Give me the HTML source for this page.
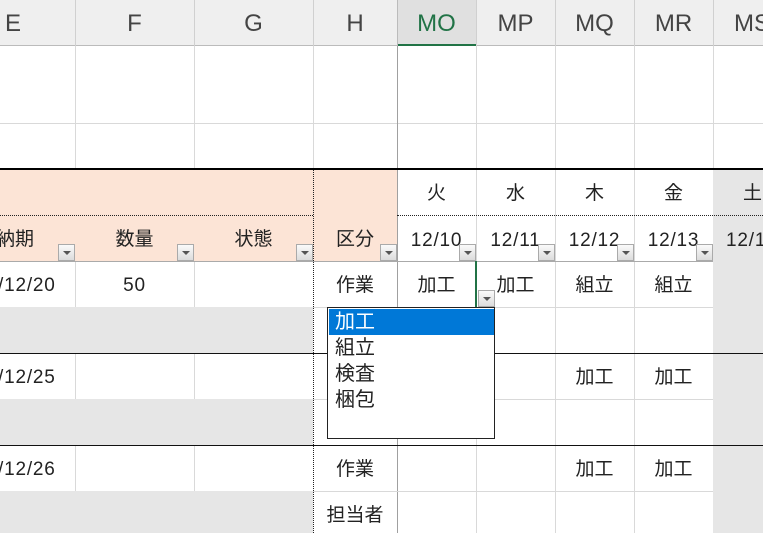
<!DOCTYPE html>
<html><head><meta charset="utf-8"><style>
body{margin:0;width:763px;height:533px;overflow:hidden;background:#fff;position:relative;font-family:"Liberation Sans","Noto Sans CJK JP",sans-serif;color:#222}
div{position:absolute;box-sizing:border-box}
.t{font-size:19px;text-align:center;line-height:20px}
.n{font-size:19px;letter-spacing:0.8px}
.h{font-size:24px;color:#444;text-align:center;top:11px;line-height:26px}
.vl{width:1px;background:#d9d9d9}
.hl{height:1px;background:#d9d9d9}
.btn{width:17px;height:17px;border:1px solid #aaa;background:linear-gradient(#fafafa,#dcdcdc)}
.btn:after{content:"";position:absolute;left:4px;top:6px;border-left:4px solid transparent;border-right:4px solid transparent;border-top:4px solid #555}
</style></head><body>
<div style="left:0;top:0;width:763px;height:46px;background:#efefef;border-bottom:1px solid #bbb"></div>
<div style="left:397px;top:0;width:79px;height:46px;background:#e0e0e0;border-bottom:2px solid #217346"></div>
<div class="vl" style="left:75px;top:0;height:46px;background:#d0d0d0"></div>
<div class="vl" style="left:194px;top:0;height:46px;background:#d0d0d0"></div>
<div class="vl" style="left:313px;top:0;height:46px;background:#d0d0d0"></div>
<div class="vl" style="left:397px;top:0;height:46px;background:#bbb"></div>
<div class="vl" style="left:476px;top:0;height:46px;background:#d0d0d0"></div>
<div class="vl" style="left:555px;top:0;height:46px;background:#d0d0d0"></div>
<div class="vl" style="left:634px;top:0;height:46px;background:#d0d0d0"></div>
<div class="vl" style="left:713px;top:0;height:46px;background:#d0d0d0"></div>
<div class="h" style="left:0;width:26px">E</div>
<div class="h" style="left:75px;width:119px">F</div>
<div class="h" style="left:194px;width:119px">G</div>
<div class="h" style="left:313px;width:84px">H</div>
<div class="h" style="left:397px;width:79px;color:#217346">MO</div>
<div class="h" style="left:476px;width:79px">MP</div>
<div class="h" style="left:555px;width:79px">MQ</div>
<div class="h" style="left:634px;width:79px">MR</div>
<div class="h" style="left:713px;width:70px;text-align:left;padding-left:21px">MS</div>
<div style="left:0;top:169px;width:397px;height:92px;background:#fce4d6"></div>
<div style="left:713px;top:169px;width:50px;height:364px;background:#e6e6e6"></div>
<div style="left:0;top:307px;width:313px;height:46px;background:#e6e6e6"></div>
<div style="left:0;top:399px;width:313px;height:46px;background:#e6e6e6"></div>
<div style="left:0;top:491px;width:313px;height:42px;background:#e6e6e6"></div>
<div class="hl" style="left:0;top:123px;width:763px"></div>
<div class="vl" style="left:75px;top:46px;height:123px"></div>
<div class="vl" style="left:194px;top:46px;height:123px"></div>
<div class="vl" style="left:313px;top:46px;height:123px"></div>
<div class="vl" style="left:397px;top:46px;height:487px;background:#a0a0a0"></div>
<div class="vl" style="left:476px;top:46px;height:487px"></div>
<div class="vl" style="left:555px;top:46px;height:487px"></div>
<div class="vl" style="left:634px;top:46px;height:487px"></div>
<div class="vl" style="left:713px;top:46px;height:123px"></div>
<div class="vl" style="left:75px;top:261px;height:46px"></div>
<div class="vl" style="left:194px;top:261px;height:46px"></div>
<div class="vl" style="left:75px;top:353px;height:46px"></div>
<div class="vl" style="left:194px;top:353px;height:46px"></div>
<div class="vl" style="left:75px;top:445px;height:46px"></div>
<div class="vl" style="left:194px;top:445px;height:46px"></div>
<div class="hl" style="left:397px;top:307px;width:316px"></div>
<div class="hl" style="left:313px;top:399px;width:400px"></div>
<div class="hl" style="left:313px;top:307px;width:84px"></div>
<div class="hl" style="left:313px;top:491px;width:400px"></div>
<div class="hl" style="left:0;top:261px;width:713px;background:#aaa"></div>
<div style="left:313px;top:169px;width:0;height:364px;border-left:1px dotted #222"></div>
<div style="left:0;top:215px;width:313px;height:0;border-top:1px dotted #222"></div>
<div style="left:397px;top:215px;width:366px;height:0;border-top:1px dotted #222"></div>
<div style="left:0;top:168px;width:763px;height:2px;background:#000"></div>
<div class="hl" style="left:0;top:353px;width:763px;background:#111"></div>
<div class="hl" style="left:0;top:445px;width:763px;background:#111"></div>
<div class="t" style="left:-4px;top:230px;width:44px;text-align:left">納期</div>
<div class="t" style="left:75px;top:230px;width:119px">数量</div>
<div class="t" style="left:194px;top:230px;width:119px">状態</div>
<div class="t" style="left:313px;top:230px;width:84px">区分</div>
<div class="btn" style="left:58px;top:244px"></div>
<div class="btn" style="left:177px;top:244px"></div>
<div class="btn" style="left:296px;top:244px"></div>
<div class="btn" style="left:380px;top:244px"></div>
<div class="t" style="left:397px;top:184px;width:79px">火</div>
<div class="t" style="left:476px;top:184px;width:79px">水</div>
<div class="t" style="left:555px;top:184px;width:79px">木</div>
<div class="t" style="left:634px;top:184px;width:79px">金</div>
<div class="t" style="left:713px;top:184px;width:79px">土</div>
<div class="t n" style="left:397px;top:231px;width:79px">12/10</div>
<div class="t n" style="left:476px;top:231px;width:79px">12/11</div>
<div class="t n" style="left:555px;top:231px;width:79px">12/12</div>
<div class="t n" style="left:634px;top:231px;width:79px">12/13</div>
<div class="t n" style="left:726px;top:231px;width:79px;text-align:left">12/14</div>
<div class="btn" style="left:459px;top:244px"></div>
<div class="btn" style="left:538px;top:244px"></div>
<div class="btn" style="left:617px;top:244px"></div>
<div class="btn" style="left:696px;top:244px"></div>
<div class="t n" style="left:-2px;top:276px;width:80px;text-align:left">/12/20</div>
<div class="t n" style="left:75px;top:276px;width:119px">50</div>
<div class="t" style="left:313px;top:276px;width:84px">作業</div>
<div class="t" style="left:397px;top:276px;width:79px">加工</div>
<div class="t" style="left:476px;top:276px;width:79px">加工</div>
<div class="t" style="left:555px;top:276px;width:79px">組立</div>
<div class="t" style="left:634px;top:276px;width:79px">組立</div>
<div class="t n" style="left:-2px;top:368px;width:80px;text-align:left">/12/25</div>
<div class="t" style="left:555px;top:368px;width:79px">加工</div>
<div class="t" style="left:634px;top:368px;width:79px">加工</div>
<div class="t n" style="left:-2px;top:460px;width:80px;text-align:left">/12/26</div>
<div class="t" style="left:313px;top:460px;width:84px">作業</div>
<div class="t" style="left:555px;top:460px;width:79px">加工</div>
<div class="t" style="left:634px;top:460px;width:79px">加工</div>
<div class="t" style="left:313px;top:506px;width:84px">担当者</div>
<div style="left:475px;top:261px;width:2px;height:46px;background:#217346"></div>
<div class="btn" style="left:478px;top:290px"></div>
<div style="left:327px;top:307px;width:168px;height:132px;border:1px solid #222;background:#fff;font-size:20px;line-height:26px;padding-left:7px;padding-top:1px">
<div style="left:1px;top:1px;width:165px;height:26px;background:#0078d7"></div>
<div style="position:relative;color:#fff">加工</div>
<div style="position:relative">組立</div>
<div style="position:relative">検査</div>
<div style="position:relative">梱包</div>
</div>
</body></html>
